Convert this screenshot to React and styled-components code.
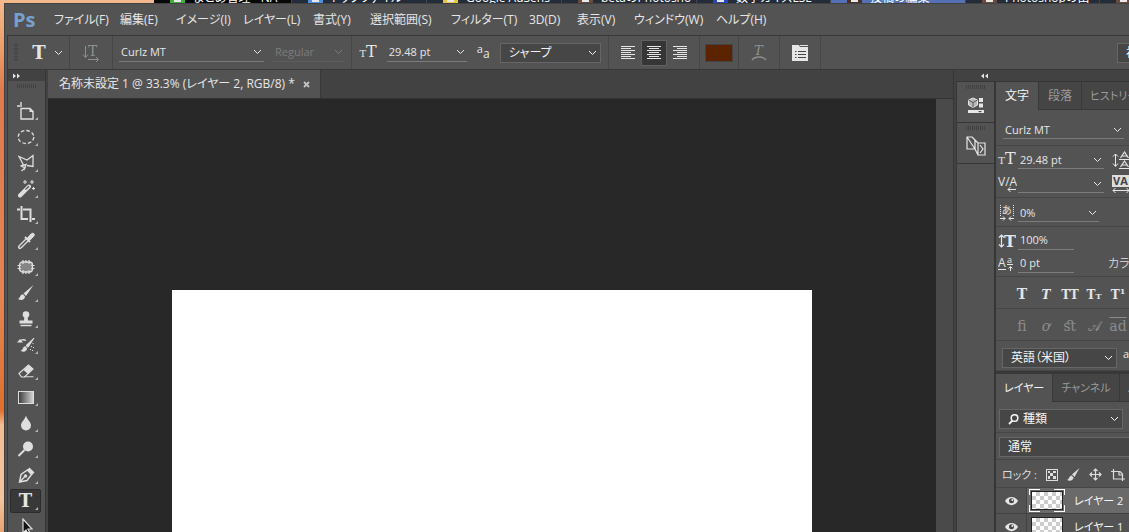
import styled, { createGlobalStyle } from "styled-components";

const menus = [
  ["ファイル(F)", 66],
  ["編集(E)", 56],
  ["イメージ(I)", 67],
  ["レイヤー(L)", 70],
  ["書式(Y)", 57],
  ["選択範囲(S)", 81],
  ["フィルター(T)", 78],
  ["3D(D)", 48],
  ["表示(V)", 57],
  ["ウィンドウ(W)", 82],
  ["ヘルプ(H)", 60],
];

const pages = [
  { title: "まとめ管理 - NA", width: 138, dark: true, icon: "#3fae3a" },
  { title: "トップファイル", width: 135, icon: "#4f8fe0" },
  { title: "Google AdSens", width: 135, icon: "#e8c545" },
  { title: "betaのPhotosho", width: 135, icon: "#6b4a3c" },
  { title: "数字カイズLSE", width: 134, icon: "#2547b8" },
  { title: "投稿の編集", width: 135, active: true, icon: "#4a3026" },
  { title: "Photoshopの出", width: 134, icon: "#6b4a3c" },
  { title: "", width: 30, icon: "#6b4a3c" },
];

const toolIcons = [
  {
    name: "アートボード",
    art: (
      <>
        <path d="M4 0v5M0 4h3M4 6.5h9l3 3v7.500H4z" strokeWidth="1.400" />
        <path d="M12.500 6v4H17z" fill="currentColor" stroke="none" />
      </>
    ),
  },
  {
    name: "楕円形選択",
    art: <ellipse cx="9" cy="9" rx="7.800" ry="6.500" strokeDasharray="3.600 2" strokeWidth="1.300" />,
  },
  {
    name: "多角形選択",
    art: (
      <>
        <path d="M6.500 11 2 2.500l8 3.500 6-4.500v11l-6-1" strokeWidth="1.300" />
        <path d="M3.500 12 9 10.500 7 16M4 12l4 2-3.500 3" strokeWidth="1.300" />
      </>
    ),
  },
  {
    name: "自動選択",
    art: (
      <>
        <path d="M3 15.500 12 6.500" strokeWidth="4" strokeLinecap="round" />
        <path d="M8.500 9.500 12 6.300" stroke="#535353" strokeWidth="1.200" />
        <path d="M8 0v4M6 2h4M15 0v4M13 2h4M16.500 7v3M15 8.500h3" strokeWidth="1.100" />
      </>
    ),
  },
  {
    name: "切り抜き",
    art: <path d="M0 3.500h3M4.500 0v13H11M6 3.500h7.500V16M15 13h3" strokeWidth="2" />,
  },
  {
    name: "スポイト",
    art: (
      <>
        <path d="M9.500 6.500 2.500 13.500c-1 1-1 2-.5 2.500s1.500.5 2.500-.5L11.500 8.500" strokeWidth="1.400" />
        <path d="m8 5 5 5M10.500 7l4-4" strokeWidth="2" />
        <path d="m10.500 6.500 3-4c3-3 5 0 3 2l-4 4z" fill="currentColor" />
      </>
    ),
  },
  {
    name: "パッチ",
    art: (
      <>
        <rect x="2.500" y="4" width="13" height="10" rx="3" fill="#858585" strokeWidth="1.300" />
        <path d="M6 2v4M9 2v3M12 2v4M6 12v4M9 13v3M12 12v4M0.500 7.500H4M0.500 10.500H4M14 7.500h3.500M14 10.500h3.500" strokeWidth="1.200" />
      </>
    ),
  },
  {
    name: "ブラシ",
    art: (
      <g fill="currentColor" stroke="none">
        <path d="M16.500 1 6.500 9.500l2.500 2.500z" />
        <path d="M6 10.300c-3 0-2.500 3.700-5 4.700 3 2 7 1 7-2.500z" />
      </g>
    ),
  },
  {
    name: "コピースタンプ",
    art: (
      <g fill="currentColor" stroke="none">
        <circle cx="9" cy="4.500" r="3.300" />
        <path d="M7.500 6h3l.5 4.500h4.500v3h-13v-3H7zM3.500 14.800h11v1.500h-11z" />
      </g>
    ),
  },
  {
    name: "ヒストリーブラシ",
    art: (
      <>
        <path d="M17 2 9 9.500l2 1.800z" fill="currentColor" stroke="currentColor" />
        <path d="M8.500 10.300c-3 0-2 3.500-5 4.500 3 2 6.500 1 6.500-2.500z" fill="currentColor" stroke="none" />
        <path d="M9 4.500C6 3 3.500 4 3 6" strokeWidth="1.300" />
        <path d="M0 6.500h6L3 3z" fill="currentColor" stroke="none" />
        <path d="M16 7v1M14.500 10v1M16.500 11v1M13.500 13v1M15.500 14v1" />
      </>
    ),
  },
  {
    name: "消しゴム",
    art: (
      <>
        <path d="M2 11.500 11.500 3l4.500 4-8.500 8h-3z" strokeWidth="1.200" />
        <path d="m6.500 8 5-5L16 7l-5 5zM7 15.200h9.500v-1H7z" fill="currentColor" stroke="none" />
      </>
    ),
  },
  {
    name: "グラデーション",
    art: (
      <>
        <defs>
          <linearGradient id="ramp">
            <stop stopColor="#3a3a3a" />
            <stop offset="1" stopColor="#d8d8d8" />
          </linearGradient>
        </defs>
        <rect x="1.500" y="3.500" width="15" height="12" fill="url(#ramp)" />
      </>
    ),
  },
  {
    name: "ぼかし",
    art: <path d="M9 1.500c1 4 5 6.500 5 10a5 5 0 0 1-10 0c0-3.500 4-6 5-10z" fill="currentColor" stroke="none" />,
  },
  {
    name: "覆い焼き",
    art: (
      <>
        <circle cx="11" cy="6.500" r="5" fill="currentColor" stroke="none" />
        <path d="m7.500 10-6 6" strokeWidth="2" />
      </>
    ),
  },
  {
    name: "ペン",
    art: (
      <>
        <path d="M2.500 16 4 8.500 10.500 4l4 4.500L10 14.500zM2.500 16l5-5" strokeWidth="1.400" />
        <circle cx="8.500" cy="10" r="1.300" fill="currentColor" />
        <path d="m10 4 2.500-2.500 5 5L15 9z" fill="currentColor" stroke="none" />
      </>
    ),
  },
  { name: "横書き文字", letter: "T", active: true },
  {
    name: "パスコンポーネント選択",
    art: <path d="M6 1v14l3-3 2.500 5 2-1-2.500-5H15z" fill="#111" strokeWidth="1.200" />,
  },
];

const Icon = ({ w = 18, h = 18, children }) => (
  <Svg width={w} height={h} viewBox={`0 0 ${w} ${h}`} fill="none" stroke="currentColor" aria-hidden="true">
    {children}
  </Svg>
);

const Chevron = () => (
  <Icon w={9} h={6}>
    <path d="m1 1 3.500 3.500L8 1" />
  </Icon>
);

const SizeGlyph = () => (
  <Glyph>
    <small>T</small>T
  </Glyph>
);

const Field = ({ label, value, list, w, dim }) => (
  <FieldBox $w={w} $dim={dim}>
    <input aria-label={label} defaultValue={value} disabled={dim} />
    {list && <Chevron />}
  </FieldBox>
);

const Picker = ({ label, value, w, icon }) => (
  <PickerBox $w={w}>
    {icon}
    <select aria-label={label}>
      <option>{value}</option>
    </select>
    <Chevron />
  </PickerBox>
);

const AlignIcon = ({ kind }) => {
  const lines = [14, 10, 14, 10, 14, 10, 14];
  const shift = { left: 0, center: 0.5, right: 1 }[kind];
  return (
    <Icon w={14} h={14}>
      {lines.map((n, i) => (
        <rect key={i} x={(14 - n) * shift} y={i * 2} width={n} height="1" fill="currentColor" stroke="none" />
      ))}
    </Icon>
  );
};

const OptionsBar = () => (
  <Options>
    <Group $w={62}>
      <GripV />
      <BigT>T</BigT>
      <Chevron />
    </Group>
    <Group $w={43} $dim>
      <IconButton aria-label="方向の切り替え">
        <Icon>
          <path d="M3.500 2v11M1 10.500l2.500 3 2.500-3M6 15.500h10M14 13l2.500 2.500L14 18" />
          <text x="6" y="12" fontFamily="DejaVu Serif, serif" fontSize="14" fill="currentColor" stroke="none">T</text>
        </Icon>
      </IconButton>
    </Group>
    <Group $w={239} $gap={9}>
      <Field label="フォント" value="Curlz MT" list w={145} />
      <Field label="スタイル" value="Regular" list w={72} dim />
    </Group>
    <Group $w={257} $gap={10}>
      <SizeGlyph />
      <Field label="サイズ" value="29.48 pt" list w={80} />
      <AntiAlias>
        <sup>a</sup>a
      </AntiAlias>
      <Picker label="アンチエイリアス" value="シャープ" w={101} />
    </Group>
    <Group $w={91}>
      <IconButton aria-label="左揃え"><AlignIcon kind="left" /></IconButton>
      <IconButton aria-label="中央揃え" $on><AlignIcon kind="center" /></IconButton>
      <IconButton aria-label="右揃え"><AlignIcon kind="right" /></IconButton>
    </Group>
    <Group $w={39}>
      <Swatch aria-label="テキストカラー" />
    </Group>
    <Group $w={41} $dim>
      <IconButton aria-label="ワープテキスト">
        <Icon>
          <path d="M2 16c3-4 11-4 14 0" strokeWidth="1.300" />
          <text x="4" y="11" fontFamily="DejaVu Serif, serif" fontSize="13" fontStyle="italic" fill="currentColor" stroke="none">T</text>
        </Icon>
      </IconButton>
    </Group>
    <Group $w={41}>
      <IconButton aria-label="パネルの切り替え">
        <Icon>
          <path d="M1 1h7l1 2h8v14H1zM9 1h8v1H9z" fill="currentColor" stroke="none" />
          <path d="M4 7.500h1.500M7 7.500h8M4 10.500h1.500M7 10.500h8M4 13.500h1.500M7 13.500h8" stroke="#444" />
        </Icon>
      </IconButton>
    </Group>
    <Workspace>
      <PickerBox $w={100}>
        <select aria-label="ワークスペース">
          <option>初期設定</option>
        </select>
      </PickerBox>
    </Workspace>
  </Options>
);

const CharacterPanel = () => (
  <section>
    <PanelTabs>
      <PanelTab $on>文字</PanelTab>
      <PanelTab>段落</PanelTab>
      <PanelTab $kana>ヒストリー</PanelTab>
    </PanelTabs>
    <Block $h={36} $pad={7} $top={5}>
      <Field label="フォント名" value="Curlz MT" list w={121} />
    </Block>
    <Block $h={52} $split>
      <Row $h={24}>
        <Lead><SizeGlyph /></Lead>
        <Field label="フォントサイズ" value="29.48 pt" list w={86} />
        <Tail>
          <Icon w={18} h={18}>
            <path d="M3.500 3v12M1 5.500 3.500 3 6 5.500M1 12.500l2.500 3 2.500-3M7 8.500h11M7 17.500h11" />
            <path d="m8.500 7 4-6 4 6M10 5h5M8.500 16l4-6 4 6M10 14h5" strokeWidth="1.200" />
          </Icon>
        </Tail>
      </Row>
      <Row $h={24}>
        <Lead>
          <Icon w={19} h={18}>
            <text x="0" y="11" fontFamily="Open Sans, sans-serif" fontSize="12" fill="currentColor" stroke="none">V/A</text>
            <path d="M18 14.500h-8M12.500 12l-2.500 2.500 2.500 2.500" />
          </Icon>
        </Lead>
        <Field label="カーニング" value="" list w={86} />
        <Tail>
          <Icon w={18} h={18}>
            <rect width="18" height="12" fill="#ddd" stroke="none" />
            <text x="1" y="10" fontFamily="Open Sans, sans-serif" fontWeight="700" fontSize="11" fill="#444" stroke="none">VA</text>
            <path d="M1 15.500h16M3.500 13 1 15.500 3.500 18M14.500 13l2.500 2.500-2.500 2.500" />
          </Icon>
        </Tail>
      </Row>
    </Block>
    <Block $h={29}>
      <Row $h={24}>
        <Lead>
          <Icon w={16} h={18}>
            <path d="M1.500 1v11M14.500 1v11" strokeDasharray="1 1" />
            <text x="3" y="10" fontFamily="Noto Sans CJK JP, sans-serif" fontSize="10" fill="currentColor" stroke="none">あ</text>
            <path d="M1 14.500h5M4 12.500l2 2-2 2M15 14.500h-5M12 12.500l-2 2 2 2" />
          </Icon>
        </Lead>
        <Field label="ツメ" value="0%" list w={81} />
      </Row>
    </Block>
    <Block $h={50} $split>
      <Row $h={23}>
        <Lead>
          <Icon w={18} h={16}>
            <path d="M3.500 2v12M1 4.500 3.500 2 6 4.500M1 11.500 3.500 14 6 11.500" strokeWidth="1.200" />
            <text x="6" y="14" fontFamily="DejaVu Serif, serif" fontWeight="700" fontSize="16" fill="currentColor" stroke="none">T</text>
          </Icon>
        </Lead>
        <Field label="垂直比率" value="100%" w={56} />
      </Row>
      <Row $h={23}>
        <Lead>
          <Icon w={18} h={16}>
            <text x="0" y="11" fontFamily="Open Sans, sans-serif" fontSize="12" fill="currentColor" stroke="none">A</text>
            <text x="9" y="7" fontFamily="Open Sans, sans-serif" fontSize="9" fill="currentColor" stroke="none">a</text>
            <path d="M0 13.500h8M9 8.500h6M12.500 15V10.500M10.500 12.500l2-2 2 2" />
          </Icon>
        </Lead>
        <Field label="ベースラインシフト" value="0 pt" w={56} />
        <ColorLabel>カラー :</ColorLabel>
      </Row>
    </Block>
    <Block $h={32} $top={4}>
      <StyleRow>
        <StyleButton><b>T</b></StyleButton>
        <StyleButton><i>T</i></StyleButton>
        <StyleButton>TT</StyleButton>
        <StyleButton>T<small>T</small></StyleButton>
        <StyleButton>T<sup>1</sup></StyleButton>
      </StyleRow>
    </Block>
    <Block $h={32}>
      <StyleRow $dim>
        <StyleButton disabled>fi</StyleButton>
        <StyleButton disabled><i>ơ</i></StyleButton>
        <StyleButton disabled>ﬆ</StyleButton>
        <StyleButton disabled>𝒜</StyleButton>
        <StyleButton disabled><u>ad</u></StyleButton>
      </StyleRow>
    </Block>
    <Block $h={30} $pad={6} $top={4}>
      <Picker label="言語" value="英語（米国）" w={115} />
      <AntiAlias><sup>a</sup>a</AntiAlias>
    </Block>
  </section>
);

const LayersPanel = () => (
  <Layers>
    <PanelTabs>
      <PanelTab $on $kana>レイヤー</PanelTab>
      <PanelTab $kana>チャンネル</PanelTab>
      <PanelTab $kana>パス</PanelTab>
    </PanelTabs>
    <Block $h={31} $pad={3} $top={4}>
      <Picker
        label="フィルターの種類"
        value="種類"
        w={124}
        icon={
          <Icon w={11} h={11}>
            <circle cx="6.500" cy="4" r="3.300" strokeWidth="1.500" />
            <path d="M4.500 6.500 1 10" strokeWidth="1.800" />
          </Icon>
        }
      />
    </Block>
    <Block $h={27} $pad={3}>
      <Picker label="描画モード" value="通常" w={180} />
    </Block>
    <Block $h={28} $pad={6}>
      <LockRow>
        <span>ロック :</span>
        <Icon w={12} h={12}>
          <rect x="0.500" y="0.500" width="11" height="11" />
          <path d="M2 2h2v2H2zM7 2h3v2H7zM4 4h3v3H4zM2 7h2v3H2zM7 7h3v3H7z" fill="currentColor" stroke="none" />
        </Icon>
        <Icon w={13} h={13}>
          <path d="M12.500 0 5 6.500l2.500 2.500zM4.500 7.500C2 8 2.500 11 0 12c3 1.500 6.500.5 6.500-2.500z" fill="currentColor" stroke="none" />
        </Icon>
        <Icon w={13} h={13}>
          <path d="M6.500 1v11M1 6.500h11M4.500 3l2-2 2 2M4.500 10l2 2 2-2M3 4.500l-2 2 2 2M10 4.500l2 2-2 2" strokeWidth="1.200" />
        </Icon>
        <Icon w={14} h={12}>
          <path d="M0 2.500h9l2.500 2.500V12M2.500 0v10H14M8 3v3h3" strokeWidth="1.200" />
        </Icon>
      </LockRow>
    </Block>
    <Layer name="レイヤー 2" on />
    <Layer name="レイヤー 1" />
  </Layers>
);

const Layer = ({ name, on }) => (
  <LayerRow>
    <EyeButton aria-label="表示の切り替え">
      <Icon w={13} h={10}>
        <path d="M0 5c3-5.500 10-5.500 13 0-3 5.500-10 5.500-13 0z" fill="currentColor" stroke="none" />
        <circle cx="6.500" cy="4.800" r="2.500" fill="#444" stroke="none" />
        <circle cx="7.300" cy="4" r="1" fill="#eee" stroke="none" />
      </Icon>
    </EyeButton>
    <LayerBody $on={on}>
      <ThumbFrame $on={on}>
        <Thumb />
      </ThumbFrame>
      {name}
    </LayerBody>
  </LayerRow>
);

const App = () => {
  return (
    <Desktop>
      <GlobalStyle />
      <Browser>
        {pages.map((page, i) => (
          <Page key={i} $w={page.width} $active={page.active} $dark={page.dark}>
            <Favicon $c={page.icon} />
            {page.title}
          </Page>
        ))}
      </Browser>
      <Window>
        <MenuBar>
          <Logo>Ps</Logo>
          {menus.map(([label, w]) => (
            <MenuItem key={label} $w={w}>{label}</MenuItem>
          ))}
        </MenuBar>
        <OptionsBar />
        <Main>
          <Toolbar>
            <DockHead>
              <Icon w={9} h={6}>
                <path d="m1 .5 3 2.500-3 2.500zM5 .5 8 3 5 5.500z" fill="currentColor" stroke="none" />
              </Icon>
            </DockHead>
            <Grip />
            <Tools>
              {toolIcons.map((tool) => (
                <Tool key={tool.name} aria-label={tool.name} $on={tool.active}>
                  {tool.letter ? <BigT>{tool.letter}</BigT> : <Icon>{tool.art}</Icon>}
                </Tool>
              ))}
            </Tools>
          </Toolbar>
          <Editor>
            <DocTabs>
              <DocTab>
                名称未設定 1 @ 33.3% (レイヤー 2, RGB/8) *
                <Close aria-label="閉じる">
                  <Icon w={7} h={7}>
                    <path d="m1 1 5 5M6 1 1 6" strokeWidth="1.800" />
                  </Icon>
                </Close>
              </DocTab>
            </DocTabs>
            <Stage>
              <Pasteboard>
                <Paper />
              </Pasteboard>
              <Scrollbar />
            </Stage>
          </Editor>
          <Dock>
            <DockHead $inset={26}>
              <Icon w={9} h={6}>
                <path d="m4 .5-3 2.500 3 2.500zM8 .5 5 3l3 2.500z" fill="currentColor" stroke="none" />
              </Icon>
            </DockHead>
            <DockBody>
              <Strip>
                <StripItem>
                  <Grip />
                  <IconButton aria-label="ライブラリ">
                    <Icon>
                      <path d="m6 2 4.500 2v5L6 11.500 1.500 9V4z" fill="#b8b8b8" />
                      <path d="M1.500 4 6 6.500 10.500 4M6 6.500v5" stroke="#555" />
                      <path d="M12 2h4v4h-4zM12 7.500h4v4h-4zM1 14h16v3H1z" fill="currentColor" stroke="none" />
                      <path d="m11 15 2 1.500 2-1.500z" fill="#444" stroke="none" />
                    </Icon>
                  </IconButton>
                </StripItem>
                <StripItem>
                  <Grip />
                  <IconButton aria-label="コピーソース">
                    <Icon w={20} h={20}>
                      <path d="M1 1h5l3 3v9H1zM1 1l8 12M12 7h7v12h-7zM6 1l6 6M9 13l3 6M14 9l3 4-3 4" strokeWidth="1.200" />
                    </Icon>
                  </IconButton>
                </StripItem>
              </Strip>
              <Panels>
                <CharacterPanel />
                <LayersPanel />
              </Panels>
            </DockBody>
          </Dock>
        </Main>
      </Window>
    </Desktop>
  );
};

const GlobalStyle = createGlobalStyle`
* {
  box-sizing: border-box;
  margin: 0;
  padding: 0;
}

body {
  overflow: hidden;
  background: #535353;
  color: #e6e6e6;
  font: 12px/16px "Open Sans", "Noto Sans CJK JP", sans-serif;
  font-feature-settings: "palt";
}

button, input, select {
  border: 0;
  border-radius: 0;
  outline: 0;
  background: none;
  color: inherit;
  font: inherit;
  font-feature-settings: inherit;
}
`;

const Svg = styled.svg`
display: block;
flex: none;
`;

const Desktop = styled.div`
display: flex;
flex-direction: column;
height: 100vh;
padding-left: 4px;
overflow: hidden;
background: linear-gradient(#f3b98c 0, #ec9d68 50px, #dc7c4a 90px, #e58450 300px, #e06f2c 410px, #f0bd92 425px, #f3c59c 500px, #e9a26e 532px);
`;

const Browser = styled.div`
display: flex;
flex: none;
height: 3px;
margin-left: 150px;
overflow: hidden;
background: #1c222c;
`;

const Page = styled.div`
display: flex;
flex: none;
align-items: flex-end;
gap: 8px;
width: ${({ $w }) => $w}px;
height: 3px;
padding-left: 16px;
overflow: hidden;
border-right: 1px solid #3c4654;
background: ${({ $active, $dark }) => ($active ? "#5570b4" : $dark ? "#080808" : "#232c38")};
color: #fff;
white-space: nowrap;
line-height: 10px;
`;

const Favicon = styled.i`
flex: none;
width: 15px;
height: 3px;
border: solid ${({ $c }) => $c};
border-width: 0 4px 1px;
background: #e8e8e8;
`;

const Window = styled.div`
display: flex;
flex: 1;
flex-direction: column;
min-height: 0;
border-top: 1px solid #414141;
border-left: 1px solid #414141;
background: #535353;
`;

const MenuBar = styled.nav`
display: flex;
flex: none;
align-items: center;
height: 31px;
padding-left: 8px;
`;

const Logo = styled.span`
width: 41px;
color: #76a0cf;
font-size: 20px;
font-weight: 700;
line-height: 24px;
`;

const MenuItem = styled.button`
width: ${({ $w }) => $w}px;
text-align: left;
white-space: nowrap;
`;

const Options = styled.div`
display: flex;
flex: none;
height: 35px;
margin-left: 2px;
overflow: hidden;
border: solid #383838;
border-width: 1px 0 1px 1px;
`;

const Group = styled.div`
display: flex;
flex: none;
align-items: center;
justify-content: center;
gap: ${({ $gap }) => $gap || 0}px;
width: ${({ $w }) => $w}px;
border-right: 1px solid #464646;
color: ${({ $dim }) => ($dim ? "#8f8f8f" : "inherit")};
`;

const Workspace = styled.div`
display: flex;
flex: none;
align-items: center;
width: 12px;
margin-left: auto;
`;

const GripV = styled.i`
width: 4px;
height: 18px;
margin-right: 14px;
background: repeating-linear-gradient(#424242 0 1px, #535353 1px 2px);
`;

const BigT = styled.span`
font: 700 18px/20px "DejaVu Serif", serif;
color: #e4e4e4;

${Group} & {
  margin-right: 8px;
}
`;

const Glyph = styled.span`
font: 16px/18px "DejaVu Serif", serif;

small {
  font-size: 10px;
}
`;

const AntiAlias = styled.span`
font-size: 12px;
line-height: 16px;

sup {
  font-size: 11px;
  line-height: 1;
}
`;

const FieldBox = styled.label`
display: flex;
flex: none;
align-items: center;
width: ${({ $w }) => $w}px;
height: 18px;
padding-right: 2px;
border-bottom: 1px solid ${({ $dim }) => ($dim ? "#5e5e5e" : "#7c7c7c")};
color: ${({ $dim }) => ($dim ? "#7c7c7c" : "#e6e6e6")};

input {
  flex: 1;
  min-width: 0;
  padding-left: 2px;
  font-size: 11px;
}
`;

const PickerBox = styled.label`
display: flex;
flex: none;
align-items: center;
gap: 4px;
width: ${({ $w }) => $w}px;
height: 20px;
padding: 0 3px 0 8px;
border: 1px solid #666;
background: #464646;
color: #f4f4f4;

select {
  flex: 1;
  min-width: 0;
  appearance: none;
}
`;

const IconButton = styled.button`
display: flex;
align-items: center;
justify-content: center;
width: 26px;
height: 26px;
border: 1px solid ${({ $on }) => ($on ? "#626262" : "transparent")};
background: ${({ $on }) => ($on ? "#363636" : "none")};
`;

const Swatch = styled.button`
width: 28px;
height: 18px;
border: 1px solid #444;
background: #5c2301;
`;

const Main = styled.div`
display: flex;
flex: 1;
min-height: 0;
margin-left: 2px;
border-left: 1px solid #383838;
background: #424242;
`;

const Toolbar = styled.aside`
flex: none;
width: 38px;
border-right: 1px solid #363636;
background: #535353;
`;

const DockHead = styled.div`
display: flex;
align-items: center;
height: 11px;
padding-left: ${({ $inset }) => $inset || 4}px;
background: #424242;
`;

const Grip = styled.div`
width: 20px;
height: 4px;
margin: 3px auto 0;
background: repeating-linear-gradient(90deg, #424242 0 1px, #535353 1px 2px);
`;

const Tools = styled.div`
display: grid;
gap: 2px;
padding: 11px 4px 0 2px;
`;

const Tool = styled.button`
display: flex;
align-items: center;
justify-content: center;
position: relative;
height: 24px;
border: 1px solid ${({ $on }) => ($on ? "#2c2c2c" : "transparent")};
border-radius: 2px;
background: ${({ $on }) => ($on ? "#383838" : "none")};
color: #dedede;

&::after {
  content: "";
  position: absolute;
  right: 2px;
  bottom: 2px;
  border-left: 3px solid transparent;
  border-bottom: 3px solid #b4b4b4;
}
`;

const Editor = styled.main`
display: flex;
flex: 1;
flex-direction: column;
min-width: 0;
margin-left: 2px;
`;

const DocTabs = styled.div`
display: flex;
flex: none;
height: 29px;
border-bottom: 1px solid #333;
`;

const DocTab = styled.div`
display: flex;
align-items: center;
gap: 8px;
padding: 0 10px 0 11px;
border-right: 1px solid #383838;
background: #535353;
white-space: nowrap;
`;

const Close = styled.button`
color: #c4c4c4;
`;

const Stage = styled.div`
display: flex;
flex: 1;
min-height: 0;
overflow: hidden;
`;

const Pasteboard = styled.div`
flex: 1;
padding-top: 191px;
background: #282828;
`;

const Paper = styled.div`
width: 640px;
height: 480px;
margin: 0 auto;
background: #fff;
`;

const Scrollbar = styled.div`
width: 17px;
background: #4a4a4a;
`;

const Dock = styled.aside`
display: flex;
flex: none;
flex-direction: column;
width: 176px;
overflow: hidden;
border-left: 1px solid #363636;
`;

const DockBody = styled.div`
display: flex;
flex: 1;
min-height: 0;
padding-left: 2px;
`;

const Strip = styled.div`
flex: none;
width: 38px;
border-left: 1px solid #363636;
border-top: 1px solid #363636;
background: #535353;
`;

const StripItem = styled.div`
display: flex;
flex-direction: column;
align-items: center;
gap: 3px;
height: 41px;
border-bottom: 1px solid #363636;
`;

const Panels = styled.div`
flex: 1;
min-width: 0;
overflow: hidden;
border-top: 1px solid #363636;
border-left: 2px solid #363636;
background: #535353;
`;

const PanelTabs = styled.div`
display: flex;
height: 28px;
background: #424242;
`;

const PanelTab = styled.button`
flex: none;
padding: 0 ${({ $kana }) => ($kana ? 8 : 9)}px;
border: solid #383838;
border-width: 0 1px ${({ $on }) => ($on ? 0 : 1)}px 0;
background: ${({ $on }) => ($on ? "#535353" : "#454545")};
color: ${({ $on }) => ($on ? "#f4f4f4" : "#9c9c9c")};
font-size: ${({ $kana }) => ($kana ? 11 : 12)}px;
white-space: nowrap;
`;

const Block = styled.div`
display: flex;
flex-direction: ${({ $split }) => ($split ? "column" : "row")};
align-items: ${({ $split }) => ($split ? "stretch" : "center")};
gap: ${({ $split }) => ($split ? 0 : 6)}px;
height: ${({ $h }) => $h}px;
padding: ${({ $top }) => $top || 2}px 0 0 ${({ $pad }) => $pad || 0}px;
border-bottom: 1px solid #464646;
`;

const Row = styled.div`
display: flex;
flex: none;
align-items: center;
height: ${({ $h }) => $h}px;
`;

const Lead = styled.span`
display: flex;
flex: none;
justify-content: center;
width: 22px;
`;

const Tail = styled.span`
margin-left: 8px;
`;

const ColorLabel = styled.span`
margin-left: 34px;
color: #c8c8c8;
white-space: nowrap;
`;

const StyleRow = styled.div`
display: flex;
padding-left: 14px;
color: ${({ $dim }) => ($dim ? "#8c8c8c" : "#e4e4e4")};
`;

const StyleButton = styled.button`
flex: none;
width: 24px;
font: 700 12px/18px "DejaVu Serif", serif;
white-space: nowrap;

&:disabled {
  font-size: 14px;
  font-weight: 400;
}

b {
  font-size: 14px;
}

u {
  text-decoration: overline;
}

small, sup {
  font-size: 8px;
  line-height: 1;
}
`;

const Layers = styled.section`
border-top: 3px solid #383838;
`;

const LockRow = styled.div`
display: flex;
align-items: center;
gap: 9px;
color: #dcdcdc;
font-size: 11px;
white-space: nowrap;
`;

const LayerRow = styled.div`
display: flex;
height: 26px;
border-bottom: 1px solid #424242;
`;

const EyeButton = styled.button`
display: flex;
flex: none;
align-items: center;
justify-content: center;
width: 31px;
border-right: 1px solid #424242;
`;

const LayerBody = styled.div`
display: flex;
flex: 1;
align-items: center;
gap: 9px;
padding-left: 2px;
background: ${({ $on }) => ($on ? "#6a6a6a" : "none")};
color: #f4f4f4;
font-size: 11px;
white-space: nowrap;
`;

const ThumbFrame = styled.span`
flex: none;
padding: 2px;
background: ${({ $on }) =>
    $on
      ? "linear-gradient(90deg, #fff 11px, transparent 11px 25px, #fff 25px) 0 0 / 100% 1px no-repeat, linear-gradient(90deg, #fff 11px, transparent 11px 25px, #fff 25px) 0 100% / 100% 1px no-repeat, linear-gradient(#fff 6px, transparent 6px 16px, #fff 16px) 0 0 / 1px 100% no-repeat, linear-gradient(#fff 6px, transparent 6px 16px, #fff 16px) 100% 0 / 1px 100% no-repeat"
      : "none"};
`;

const Thumb = styled.span`
display: block;
width: 32px;
height: 19px;
border: 1px solid #222;
background: repeating-conic-gradient(#ccc 0 25%, #fff 0 50%) 0 0 / 8px 8px;
`;

export default App;
